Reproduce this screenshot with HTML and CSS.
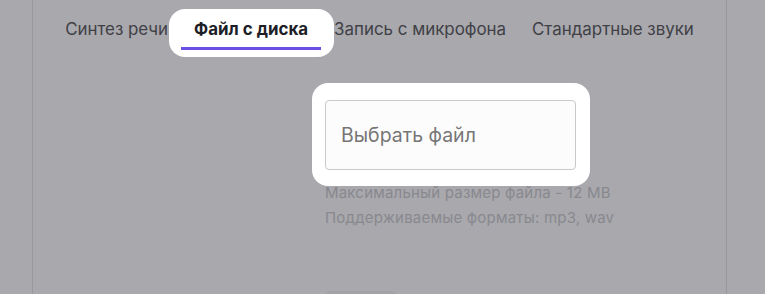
FILE: index.html
```html
<!DOCTYPE html>
<html lang="ru">
<head>
<meta charset="utf-8">
<link rel="stylesheet" href="styles.css">
</head>
<body>
<div class="card">
  <nav class="tabs">
    <span class="tab">Синтез речи</span>
    <span class="spot spot-tab"><span class="tab tab-active">Файл с диска</span></span>
    <span class="tab">Запись с микрофона</span>
    <span class="tab">Стандартные звуки</span>
  </nav>
  <section class="upload">
    <div class="spot spot-input"><div class="file-input">Выбрать файл</div></div>
    <p class="hint">Максимальный размер файла - 12 MB</p>
    <p class="hint">Поддерживаемые форматы: mp3, wav</p>
    <div class="btn"></div>
  </section>
</div>
</body>
</html>
```
FILE: styles.css
```css
html, body {
  margin: 0;
  padding: 0;
  height: 100%;
  overflow: hidden;
}
body {
  background: #a8a8ad;
  font-family: "Inter", "Noto Sans", sans-serif;
}
.card {
  margin-left: 32px;
  width: 693px;
  height: 100%;
  overflow: hidden;
  border-left: 1px solid #98989d;
  border-right: 1px solid #98989d;
}
.tabs {
  display: flex;
  justify-content: center;
  padding-top: 18px;
}
.tab {
  display: block;
  padding: 0 13px 6px;
  font-size: 16.9px;
  line-height: 23px;
  color: #404046;
  border-bottom: 3px solid transparent;
  white-space: nowrap;
}
.tab-active {
  font-weight: 700;
  color: #1e1e28;
  border-bottom-color: #6c4fe6;
}
.spot {
  display: block;
  position: relative;
  z-index: 1;
}
.spot::before {
  content: "";
  position: absolute;
  background: #ffffff;
  border-radius: 16px;
  z-index: -1;
}
.spot-tab::before {
  top: -9px;
  bottom: -7px;
  left: -12px;
  right: -13px;
}
.spot-input {
  width: 251px;
}
.spot-input::before {
  top: -17px;
  bottom: -16px;
  left: -13px;
  right: -14px;
}
.upload {
  padding-left: 292px;
  padding-top: 50px;
}
.file-input {
  height: 70px;
  box-sizing: border-box;
  border: 1px solid #c9c9c9;
  border-radius: 4px;
  background: #fcfcfc;
  padding-left: 15px;
  display: flex;
  align-items: center;
  font-size: 19.5px;
  color: #767676;
}
.hint {
  margin: 0;
  font-size: 15px;
  letter-spacing: 0.2px;
  line-height: 25px;
  color: #88888d;
}
.spot + .hint {
  margin-top: 10px;
}
.btn {
  margin-top: 61px;
  width: 72px;
  height: 30px;
  border-radius: 6px;
  background: #a2a2a7;
}
```
